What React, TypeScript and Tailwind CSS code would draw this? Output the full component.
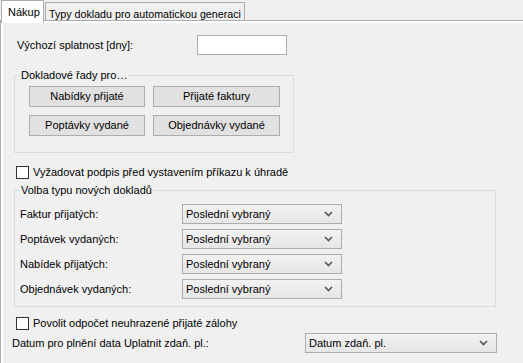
const Chevron = () => (
  <svg width="9" height="6" viewBox="0 0 9 6" className="shrink-0">
    <polyline points="1,1 4.5,4.5 8,1" fill="none" stroke="#5a5a5a" strokeWidth="1.7" />
  </svg>
);

const Combo = ({ value, className }: { value: string; className: string }) => (
  <div
    className={`flex items-center justify-between h-[20px] pl-[3px] pr-[8px] border border-[#acacac] bg-gradient-to-b from-[#f2f2f2] to-[#e6e6e6] ${className}`}
  >
    <span>{value}</span>
    <Chevron />
  </div>
);

const Button = ({ label, w }: { label: string; w: string }) => (
  <div className={`flex items-center justify-center h-[21px] border border-[#adadad] bg-[#e1e1e1] ${w}`}>
    {label}
  </div>
);

const Checkbox = ({ label }: { label: string }) => (
  <div className="flex items-center h-[13px] ml-[13px]">
    <div className="w-[13px] h-[13px] bg-white border border-[#333333]" />
    <span className="ml-[4px]">{label}</span>
  </div>
);

const GroupLabel = ({ text }: { text: string }) => (
  <span className="absolute left-[5px] top-[-8px] px-[1px] bg-[#f0f0f0] leading-[14px]">{text}</span>
);

const rows = ["Faktur přijatých:", "Poptávek vydaných:", "Nabídek přijatých:", "Objednávek vydaných:"];

export default function App() {
  return (
    <div className="w-[523px] h-[363px] overflow-hidden bg-[#f0f0f0] text-[11px] text-black font-['Liberation_Sans',Arial,sans-serif] flex flex-col">
      {/* tabs */}
      <div className="flex items-start h-[20px] pl-[1px] relative z-10">
        <div className="h-[23px] w-[43px] bg-white border border-b-0 border-[#acacac] pl-[6px] pt-[3px]">Nákup</div>
        <div className="mt-[2px] h-[18px] ml-[1px] whitespace-nowrap border border-b-0 border-[#acacac] bg-[#f0f0f0] px-[3px] pt-[3px] text-[10.7px]">
          Typy dokladu pro automatickou generaci
        </div>
      </div>

      {/* tab page */}
      <div className="flex-1 border-l border-t border-[#acacac] bg-white pl-[2px] pt-[2px] flex">
        <div className="flex-1 bg-[#f0f0f0] flex flex-col">
          <div className="flex items-center h-[20px] mt-[12px]">
            <span className="ml-[14px] w-[180px]">Výchozí splatnost [dny]:</span>
            <div className="w-[90px] h-[20px] bg-white border border-[#acacac]" />
          </div>

          <div className="relative ml-[11px] mt-[20px] w-[280px] h-[78px] border border-[#dcdcdc] pl-[14px] pt-[10px] flex flex-col gap-[8px]">
            <GroupLabel text="Dokladové řady pro…" />
            <div className="flex gap-[8px]">
              <Button label="Nabídky přijaté" w="w-[116px]" />
              <Button label="Přijaté faktury" w="w-[127px]" />
            </div>
            <div className="flex gap-[8px]">
              <Button label="Poptávky vydané" w="w-[116px]" />
              <Button label="Objednávky vydané" w="w-[127px]" />
            </div>
          </div>

          <div className="mt-[13px]">
            <Checkbox label="Vyžadovat podpis před vystavením příkazu k úhradě" />
          </div>

          <div className="relative ml-[11px] mt-[11px] w-[482px] h-[117px] border border-[#dcdcdc] pl-[5px] pt-[13px] flex flex-col gap-[5px]">
            <GroupLabel text="Volba typu nových dokladů" />
            {rows.map((r) => (
              <div key={r} className="flex items-center h-[20px]">
                <span className="w-[162px]">{r}</span>
                <Combo value="Poslední vybraný" className="w-[160px]" />
              </div>
            ))}
          </div>

          <div className="mt-[10px]">
            <Checkbox label="Povolit odpočet neuhrazené přijaté zálohy" />
          </div>

          <div className="flex items-center h-[20px] mt-[3px]">
            <span className="ml-[9px] w-[293px]">Datum pro plnění data Uplatnit zdaň. pl.:</span>
            <Combo value="Datum zdaň. pl." className="w-[192px]" />
          </div>
        </div>
      </div>
    </div>
  );
}
